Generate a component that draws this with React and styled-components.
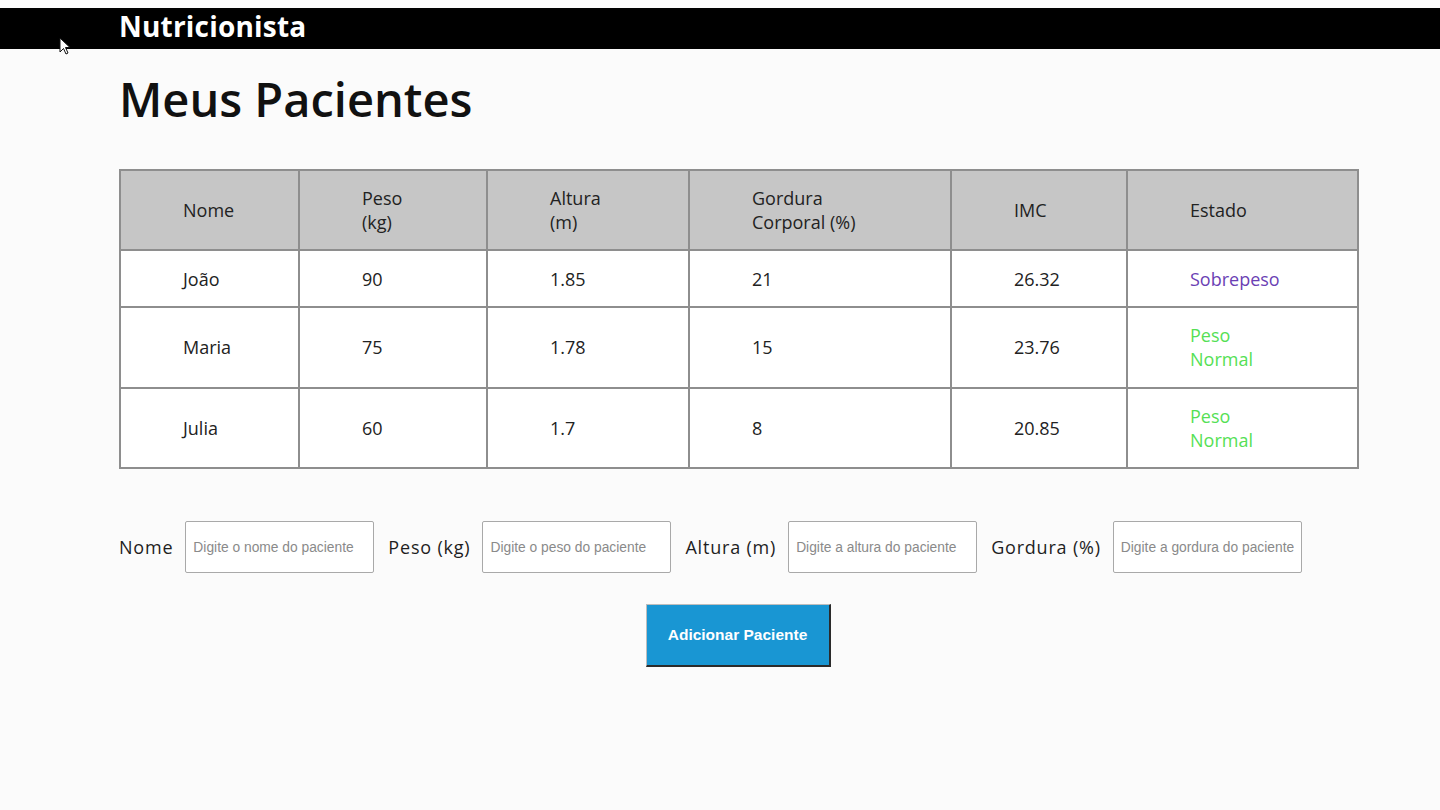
import React from "react";
import styled, { createGlobalStyle } from "styled-components";

const Global = createGlobalStyle`
  html, body { margin: 0; padding: 0; background: #fbfbfb; }
  body { font-family: "Open Sans", "Noto Sans", sans-serif; color: #1e1e1e; }
  * { box-sizing: border-box; }
`;

const Page = styled.div`
  position: relative;
  padding-top: 8px;
  min-height: 810px;
`;

const TopBar = styled.header`
  height: 41px;
  background: #000;
  padding-left: 119px;
  display: flex;
  align-items: center;
`;

const Brand = styled.h1`
  margin: 0;
  color: #fff;
  font-size: 28px;
  font-weight: 700;
  letter-spacing: 0.2px;
  line-height: 1;
  margin-top: -6px;
`;

const Cursor = styled.svg`
  position: absolute;
  left: 59px;
  top: 37px;
`;

const Main = styled.main`
  width: 1238px;
  margin-left: 119px;
  display: flex;
  flex-direction: column;
`;

const Title = styled.h2`
  margin: 24px 0 44px;
  font-size: 47px;
  font-weight: 600;
  line-height: 52px;
  letter-spacing: 0px;
  color: #111;
`;

const Table = styled.table`
  width: 1238px;
  border-collapse: collapse;
  border: 2px solid #8e8e8e;
  table-layout: fixed;
  background: #fff;
`;

const Th = styled.th`
  background: #c6c6c6;
  border: 2px solid #8e8e8e;
  font-weight: 400;
  text-align: left;
  font-size: 18px;
  line-height: 24px;
  padding: 14px 10px 14px 62px;
  height: 80px;
  color: #222;
`;

const Td = styled.td`
  border: 2px solid #8e8e8e;
  font-size: 18px;
  line-height: 24px;
  padding: 14px 10px 14px 62px;
  height: ${(p) => (p.$tall ? "80.5px" : "57px")};
  color: ${(p) => p.$color || "#222"};
`;

const Form = styled.form`
  margin-top: 52px;
  display: flex;
  align-items: center;
  flex-direction: column;
  gap: 31px;
`;

const Fields = styled.div`
  align-self: flex-start;
  display: flex;
  align-items: center;
`;

const Label = styled.label`
  font-size: 18px;
  letter-spacing: 0.8px;
  color: #1e1e1e;
  margin-right: 12px;
  white-space: nowrap;
`;

const Input = styled.input`
  width: 189px;
  height: 52px;
  border: 1px solid #a9a9a9;
  border-radius: 2px;
  background: #fff;
  padding: 0 7px;
  font-family: "Liberation Sans", Arial, sans-serif;
  font-size: 13.8px;
  margin-right: 14px;
  outline: none;
  &::placeholder { color: #8a8a8a; }
`;

const Button = styled.button`
  width: 185px;
  height: 63px;
  background: #1996d3;
  color: #fff;
  border: none;
  border-right: 2px solid #2b2b2b;
  border-bottom: 2px solid #2b2b2b;
  border-top: 1px solid #bdbdbd;
  border-left: 1px solid #bdbdbd;
  font-family: "Liberation Sans", Arial, sans-serif;
  font-weight: 700;
  font-size: 15.5px;
  cursor: pointer;
`;

const cols = [179, 188, 202, 262, 176, 231];

const patients = [
  { nome: "João", peso: "90", altura: "1.85", gordura: "21", imc: "26.32", estado: ["Sobrepeso"], color: "#6b3fb4" },
  { nome: "Maria", peso: "75", altura: "1.78", gordura: "15", imc: "23.76", estado: ["Peso", "Normal"], color: "#55df55" },
  { nome: "Julia", peso: "60", altura: "1.7", gordura: "8", imc: "20.85", estado: ["Peso", "Normal"], color: "#55df55" },
];

const lines = (arr) => arr.map((t, i) => (
  <React.Fragment key={i}>{i > 0 && <br />}{t}</React.Fragment>
));

export default function App() {
  return (
    <Page>
      <Global />
      <TopBar>
        <Brand>Nutricionista</Brand>
      </TopBar>
      <Cursor width="12" height="19" viewBox="0 0 12 19">
        <path d="M1 1 L1 15 L4.5 11.5 L7 17 L9 16 L6.5 10.5 L11 10.5 Z" fill="#fff" stroke="#111" strokeWidth="1" />
      </Cursor>
      <Main>
        <Title>Meus Pacientes</Title>
        <Table>
          <colgroup>
            {cols.map((w, i) => <col key={i} style={{ width: w }} />)}
          </colgroup>
          <thead>
            <tr>
              <Th>Nome</Th>
              <Th>{lines(["Peso", "(kg)"])}</Th>
              <Th>{lines(["Altura", "(m)"])}</Th>
              <Th>{lines(["Gordura", "Corporal (%)"])}</Th>
              <Th>IMC</Th>
              <Th>Estado</Th>
            </tr>
          </thead>
          <tbody>
            {patients.map((p) => {
              const tall = p.estado.length > 1;
              return (
                <tr key={p.nome}>
                  <Td $tall={tall}>{p.nome}</Td>
                  <Td $tall={tall}>{p.peso}</Td>
                  <Td $tall={tall}>{p.altura}</Td>
                  <Td $tall={tall}>{p.gordura}</Td>
                  <Td $tall={tall}>{p.imc}</Td>
                  <Td $tall={tall} $color={p.color}>{lines(p.estado)}</Td>
                </tr>
              );
            })}
          </tbody>
        </Table>
        <Form onSubmit={(e) => e.preventDefault()}>
          <Fields>
            <Label htmlFor="nome">Nome</Label>
            <Input id="nome" placeholder="Digite o nome do paciente" />
            <Label htmlFor="peso">Peso (kg)</Label>
            <Input id="peso" placeholder="Digite o peso do paciente" />
            <Label htmlFor="altura">Altura (m)</Label>
            <Input id="altura" placeholder="Digite a altura do paciente" />
            <Label htmlFor="gordura">Gordura (%)</Label>
            <Input id="gordura" placeholder="Digite a gordura do paciente" />
          </Fields>
          <Button type="submit">Adicionar Paciente</Button>
        </Form>
      </Main>
    </Page>
  );
}
